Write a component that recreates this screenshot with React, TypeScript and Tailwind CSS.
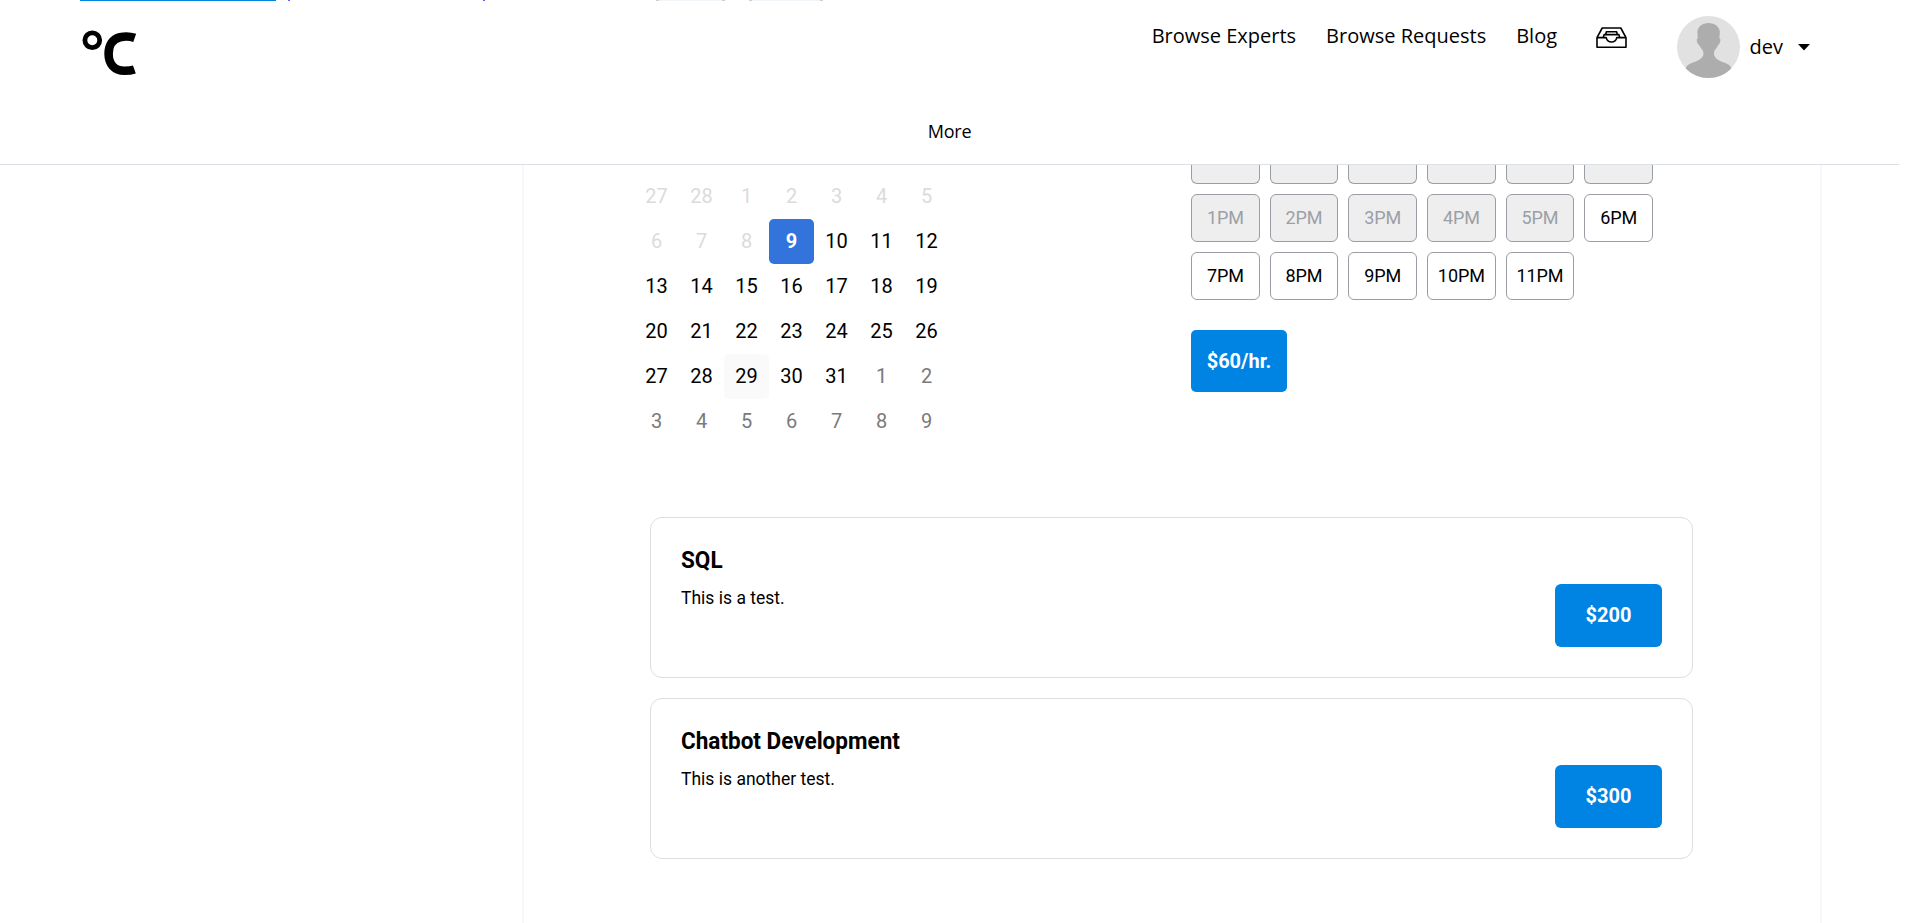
import React from "react";

type Day = { n: number; tone: "disabled" | "normal" | "next" | "selected" | "today" };

const tones = {
  disabled: "text-[#dbdbdb]",
  normal: "text-black",
  next: "text-[#7a7a7a]",
  selected: "rounded-[5px] bg-[#3273dc] font-bold text-white",
  today: "rounded-[5px] bg-[#fafafa] text-black",
};

const days: Day[] = [
  ...[27, 28, 1, 2, 3, 4, 5, 6, 7, 8].map((n): Day => ({ n, tone: "disabled" })),
  { n: 9, tone: "selected" },
  ...Array.from({ length: 22 }, (_, i): Day => ({ n: i + 10, tone: i + 10 === 29 ? "today" : "normal" })),
  ...Array.from({ length: 9 }, (_, i): Day => ({ n: i + 1, tone: "next" })),
];

const slots = [
  { t: "1PM", off: true }, { t: "2PM", off: true }, { t: "3PM", off: true },
  { t: "4PM", off: true }, { t: "5PM", off: true }, { t: "6PM", off: false },
  { t: "7PM", off: false }, { t: "8PM", off: false }, { t: "9PM", off: false },
  { t: "10PM", off: false }, { t: "11PM", off: false },
];

const services = [
  { title: "SQL", text: "This is a test.", price: "$200" },
  { title: "Chatbot Development", text: "This is another test.", price: "$300" },
];

function Logo() {
  return (
    <svg className="ml-[80px] mt-[28px] block h-[50px] w-[60px]" viewBox="80 28 60 50" fill="none" stroke="#000">
      <circle cx="92.3" cy="40.2" r="7.400" strokeWidth="4.800" />
      <path d="M134.700 37.900C131 36.600 125 36.100 120 37.300C112.500 39.100 108.600 45.200 108.600 53.800C108.600 64 114.500 70.800 124.500 70.800C128.500 70.800 131.500 70.500 134.400 69.500" strokeWidth="8.600" />
    </svg>
  );
}

function Inbox() {
  return (
    <svg className="block h-[22px] w-[31px]" viewBox="0 0 31 22" fill="none" stroke="#000" strokeWidth="1.6" strokeLinejoin="round">
      <path d="M1 10.600L6.200 1h18.600L30 10.600V20.200H1z" />
      <path d="M1 10.600h9.200c.6 2.600 2.600 4.400 5.300 4.400s4.700-1.800 5.300-4.400H30" />
      <path d="M7.200 10.400L8.200 7.600h14.600l1 2.800M9.600 7.600l.8-2.900h10.200l.8 2.900" />
    </svg>
  );
}

function Avatar() {
  return (
    <svg className="block h-[62px] w-[63px]" viewBox="0 0 63 63" preserveAspectRatio="none">
      <defs><clipPath id="face"><circle cx="31.5" cy="31.5" r="31.500" /></clipPath></defs>
      <g clipPath="url(#face)">
        <rect width="63" height="63" fill="#e1e1e1" />
        <path d="M31.500 7C25 7 20.600 11 20.400 16L20.800 22.500C18.600 23.500 20.400 28 22.100 29.500C23.500 33 26.500 34.500 26.500 38C26.500 43.500 19.500 45.800 14 48C10.500 49.500 9 51 8.500 54V63H54.500V54C54 51 52.500 49.500 49 48C43.500 45.800 37 43.500 37 38C37 34.500 39.800 33 41.200 29.500C42.900 28 44.600 23.500 42.400 22.500L42.800 16C42.600 11 38 7 31.500 7Z" fill="#adadad" />
      </g>
    </svg>
  );
}

export default function App() {
  return (
    <div className="h-[923px] w-full overflow-hidden bg-white font-['Roboto',sans-serif] text-black">
      <header className="relative flex h-[165px] w-[1899px] flex-col border-b border-[#dbdfe6] bg-white font-['Open_Sans',sans-serif]">
        <div className="absolute left-[80px] top-0 flex h-px w-[1000px]">
          <span className="w-[196px] bg-[#0084e3]" />
          <span className="ml-[12px] w-[2px] bg-[#6466e9]" />
          <span className="ml-[193px] w-[2px] bg-[#6466e9]" />
          <span className="ml-[171px] w-[69px] border-x-[3px] border-[#cfcfcf] bg-[#f0f5fa]" />
          <span className="ml-[24px] w-[74px] border-x-[3px] border-[#cfcfcf] bg-[#f0f5fa]" />
        </div>
        <div className="flex h-[112px] justify-between">
          <Logo />
          <nav className="mr-[89px] flex items-start text-[20px] leading-[28px]">
            <a className="mt-[22px]">Browse Experts</a>
            <a className="ml-[30px] mt-[22px]">Browse Requests</a>
            <a className="ml-[30px] mt-[22px]">Blog</a>
            <span className="ml-[39px] mt-[27px]"><Inbox /></span>
            <span className="ml-[49.500px] mt-[16px]"><Avatar /></span>
            <a className="ml-[10px] mt-[33px]">dev</a>
            <svg className="ml-[15px] mt-[44px] h-[7px] w-[12px]" viewBox="0 0 12 7"><path d="M0 0h12L6 6.500z" /></svg>
          </nav>
        </div>
        <a className="text-center text-[18px] leading-[38px] tracking-[-0.2px]">More</a>
      </header>

      <main className="ml-[522px] h-[758px] w-[1300px] overflow-hidden border-x-2 border-[#f8f8f8] bg-white">
        <div className="flex h-[352px]">
          <div className="ml-[110px] mt-[9px] grid w-[315px] auto-rows-[45px] grid-cols-7 content-start text-[20px]">
            {days.map((d, i) => (
              <div key={i} className={`flex items-center justify-center pb-px ${tones[d.tone]}`}>{d.n}</div>
            ))}
          </div>
          <div className="ml-[242px] w-[462px]">
            <div className="mb-[10px] grid grid-cols-6 gap-[10px]">
              {Array.from({ length: 6 }, (_, i) => (
                <div key={i} className="h-[19px] rounded-b-[6px] border border-t-0 border-[#9a9da4] bg-[#eeeeee]" />
              ))}
            </div>
            <div className="grid auto-rows-[48px] grid-cols-6 gap-[10px] text-[18px]">
              {slots.map((s) => (
                <button
                  key={s.t}
                  className={`rounded-[6px] border border-[#9a9da4] pb-[2px] tracking-[-0.1px] ${s.off ? "bg-[#eeeeee] text-[#9b9fa6]" : "bg-white text-black"}`}
                >
                  {s.t}
                </button>
              ))}
            </div>
            <button className="mt-[30px] h-[62px] w-[96px] rounded-[5px] bg-[#0084e3] text-[20px] font-bold text-white">$60/hr.</button>
          </div>
        </div>
        <div className="ml-[126px] flex w-[1043px] flex-col gap-[20px]">
          {services.map((s) => (
            <section key={s.title} className="flex h-[161px] justify-between rounded-[12px] border border-[#dedede] p-[30px]">
              <div>
                <h2 className="-mt-px origin-left scale-x-[0.938] text-[24px] font-bold leading-[26px]">{s.title}</h2>
                <p className="mt-[12px] origin-left scale-x-[0.973] text-[18px] leading-[26px]">{s.text}</p>
              </div>
              <button className="h-[63px] w-[107px] self-end rounded-[6px] bg-[#0084e3] pb-px text-[20px] font-bold text-white">{s.price}</button>
            </section>
          ))}
        </div>
      </main>
    </div>
  );
}
